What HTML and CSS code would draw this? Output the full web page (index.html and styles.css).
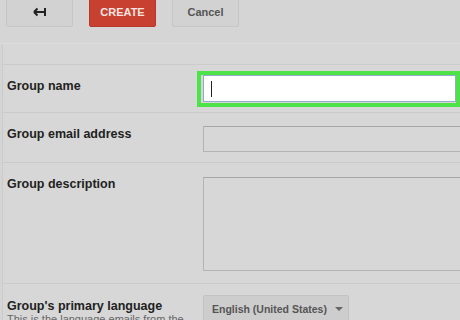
FILE: index.html
```html
<!DOCTYPE html>
<html lang="en">
<head>
    <meta charset="UTF-8">
    <meta name="viewport" content="width=device-width, initial-scale=1.0">
    <title>Create group</title>
    <link rel="stylesheet" href="styles.css">
</head>
<body>
    <div class="toolbar">
        <button class="btn btn-back" aria-label="Back">
            <svg width="14" height="10" viewBox="0 0 14 10">
                <path d="M1 5H12M12 1V9M1 5L4.5 1.5M1 5L4.5 8.5" stroke="#222" stroke-width="2" fill="none"/>
            </svg>
        </button>
        <button class="btn btn-create">CREATE</button>
        <button class="btn btn-cancel">Cancel</button>
    </div>

    <div class="panel">
        <div class="row row-name">
            <label class="row-label">Group name</label>
            <div class="field">
                <div class="highlight">
                    <div class="input input-active"><span class="caret"></span></div>
                </div>
            </div>
        </div>
        <div class="row row-email">
            <label class="row-label">Group email address</label>
            <div class="field">
                <div class="input"></div>
            </div>
        </div>
        <div class="row row-desc">
            <label class="row-label">Group description</label>
            <div class="field">
                <div class="textarea"></div>
            </div>
        </div>
        <div class="row row-lang">
            <div>
                <label class="row-label">Group's primary language</label>
                <p class="hint">This is the language emails from the</p>
            </div>
            <div class="field">
                <div class="select">English (United States) <span class="arrow"></span></div>
            </div>
        </div>
    </div>
</body>
</html>
```

FILE: styles.css
```css
/* ===== base ===== */
*{margin:0;padding:0;box-sizing:border-box;}
body{
    width:460px;height:320px;overflow:hidden;
    background:#d5d5d5;
    font-family:'Liberation Sans',Arial,sans-serif;
    color:#222;
}

/* ===== toolbar ===== */
.toolbar{
    display:flex;gap:16px;
    padding:0 0 0 6px;
    height:44px;
    border-bottom:1px solid #dcdcdc;
}
.btn{
    width:67px;height:30px;margin-top:-3px;
    border-radius:2px;
    font-family:inherit;font-size:11px;font-weight:700;
    display:flex;align-items:center;justify-content:center;
}
.btn-back,
.btn-cancel{background:#d2d2d2;border:1px solid #c6c6c6;color:#555;}
.btn-create{background:#c8402f;border:1px solid #b5392a;color:#f4e4e0;}

/* ===== form panel ===== */
.panel{
    margin-left:2px;
    padding-top:20px;
    border-left:1px solid #cbcbcb;
    background:#d7d7d7;
    height:100%;
}
.row{
    display:grid;grid-template-columns:196px 1fr;
    border-top:1px solid #cbcbcb;
    padding-left:4px;
}
.row-label{display:block;font-size:12.5px;font-weight:700;line-height:16px;padding-top:13px;}
.row-name{height:48px;}
.row-email{height:50px;}
.row-desc{height:121px;}
.row-lang .row-label{padding-top:14px;}

.field{padding-top:13px;}
.row-name .field{padding-top:6px;}
.row-desc .field{padding-top:14px;}
.row-lang .field{padding-top:11px;}

/* ===== inputs ===== */
.highlight{
    margin-left:-6px;width:263px;
    border:4px solid #4de348;
    padding:0 0 1px 2px;
}
.input{
    width:262px;height:26px;
    border:1px solid #b4b4b4;border-top-color:#a6a6a6;
    background:#d7d7d7;
}
.input-active{
    width:253px;height:27px;
    background:#fff;border-color:#94aacb;
    padding:5px 0 0 7px;
}
.caret{display:block;width:1px;height:16px;background:#222;}
.textarea{
    width:262px;height:94px;
    border:1px solid #b4b4b4;border-top-color:#a6a6a6;
}

.select{
    display:flex;align-items:center;gap:8px;
    width:146px;height:28px;padding-left:8px;
    white-space:nowrap;
    background:#cdcdcd;border:1px solid #c2c2c2;border-radius:2px;
    font-size:10.5px;font-weight:700;color:#555;
}
.arrow{border:4px solid transparent;border-top:4px solid #666;margin-top:4px;}

.hint{font-size:11px;color:#666;line-height:13px;margin-top:-1px;white-space:nowrap;}
```
